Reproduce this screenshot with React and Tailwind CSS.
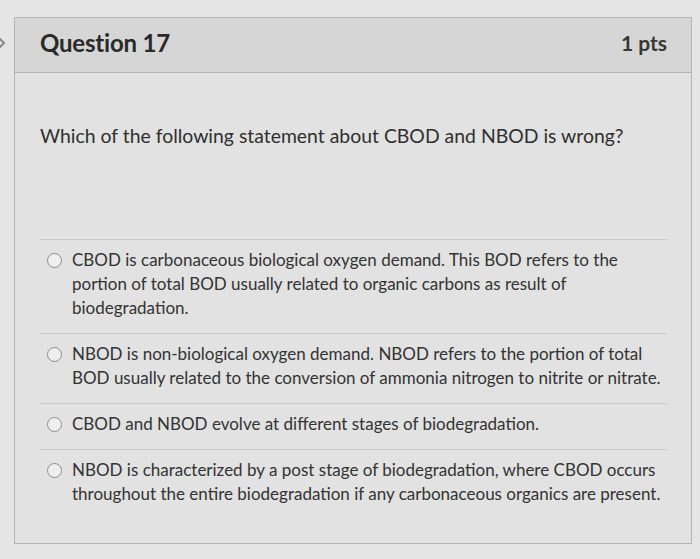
import React from 'react';

const answers = [
  'CBOD is carbonaceous biological oxygen demand. This BOD refers to the portion of total BOD usually related to organic carbons as result of biodegradation.',
  'NBOD is non-biological oxygen demand. NBOD refers to the portion of total BOD usually related to the conversion of ammonia nitrogen to nitrite or nitrate.',
  'CBOD and NBOD evolve at different stages of biodegradation.',
  'NBOD is characterized by a post stage of biodegradation, where CBOD occurs throughout the entire biodegradation if any carbonaceous organics are present.',
];

function Answer({ text }) {
  return (
    <div className="border-t border-[#c9cac9] pt-[8px] pb-[13px] flex items-start">
      <span className="mt-[5px] ml-[7px] w-[15px] h-[15px] rounded-full border-[1.5px] border-[#8a8b8a] bg-[#eeefee] shrink-0" />
      <p className="ml-[10px] w-[596px] text-[17px] leading-[24px] text-[#333333]">{text}</p>
    </div>
  );
}

export default function App() {
  return (
    <div className="w-[700px] h-[559px] bg-[#e4e5e4] font-['Lato','Open_Sans',sans-serif] flex items-start overflow-hidden">
      {/* cut-off arrow at the left edge */}
      <svg width="8" height="14" viewBox="0 0 8 14" className="mt-[36px] shrink-0">
        <path d="M-2 1 L4 7 L-2 13" fill="none" stroke="#8a8a8a" strokeWidth="2" />
      </svg>

      <div className="ml-[6px] mt-[17px] w-[678px] h-[527px] border border-[#b3b4b3] bg-[#e1e2e1] flex flex-col">
        <div className="h-[55px] bg-[#d5d6d5] border-b border-[#b3b4b3] flex items-center justify-between pl-[25px] pr-[24px] pb-[4px]">
          <h2 className="text-[24px] font-bold text-[#2a2a2a] tracking-[-0.2px]">Question 17</h2>
          <span className="text-[21px] font-bold text-[#383838]">1 pts</span>
        </div>

        <div className="px-[25px]">
          <p className="mt-[49px] text-[19.4px] leading-[28px] text-[#2f2f2f]">
            Which of the following statement about CBOD and NBOD is wrong?
          </p>

          <div className="mt-[89px] w-[627px]">
            {answers.map((a, i) => (
              <Answer key={i} text={a} />
            ))}
          </div>
        </div>
      </div>
    </div>
  );
}
